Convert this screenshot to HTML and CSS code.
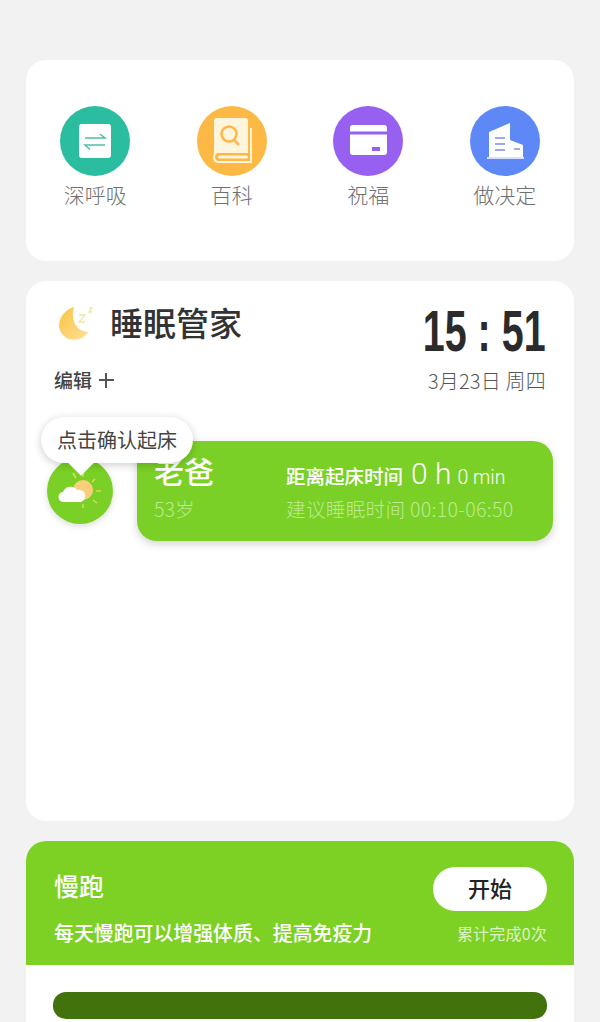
FILE: index.html
```html
<!DOCTYPE html>
<html lang="zh-CN">
<head>
    <meta charset="UTF-8">
    <title>睡眠管家</title>
    <link rel="stylesheet" href="styles.css">
</head>
<body>
    <!-- shortcuts -->
    <div class="card shortcuts">
        <div class="shortcut">
            <svg class="round-icon" viewBox="0 0 70 70">
                <circle cx="35" cy="35" r="35" fill="#2bbd9f"/>
                <rect x="19" y="18" width="32" height="34" rx="3" fill="#fff"/>
                <path d="M25 32h20l-5-4M45 39H25l5 4.500" fill="none" stroke="#4fbfa8" stroke-width="1.500"/>
            </svg>
            <span>深呼吸</span>
        </div>
        <div class="shortcut">
            <svg class="round-icon" viewBox="0 0 70 70">
                <circle cx="35" cy="35" r="35" fill="#fdb945"/>
                <path d="M17 50V15a3 3 0 0 1 3-3h28a3 3 0 0 1 3 3v31H20z" fill="#fff4dc"/>
                <path d="M54 22v34H22q-5 0-5-5q0-5 5-5h29" fill="none" stroke="#fff4dc" stroke-width="2"/>
                <rect x="21" y="49.500" width="30" height="3" rx="1.500" fill="#fff4dc"/>
                <circle cx="32" cy="28" r="7.500" fill="none" stroke="#fdb945" stroke-width="2.500"/>
                <path d="M37 34l5 5" stroke="#fdb945" stroke-width="2.500"/>
            </svg>
            <span>百科</span>
        </div>
        <div class="shortcut">
            <svg class="round-icon" viewBox="0 0 70 70">
                <circle cx="35" cy="35" r="35" fill="#9860f0"/>
                <path d="M17 25.500V22a3 3 0 0 1 3-3h31a3 3 0 0 1 3 3v3.500zM17 28.500h37V46a3 3 0 0 1-3 3H20a3 3 0 0 1-3-3z" fill="#fff"/>
                <rect x="39" y="41" width="8" height="4" fill="#9860f0"/>
            </svg>
            <span>祝福</span>
        </div>
        <div class="shortcut">
            <svg class="round-icon" viewBox="0 0 70 70">
                <circle cx="35" cy="35" r="35" fill="#5f88f7"/>
                <path d="M19 26L40 17V51H19zM40 34l13 5V51H40z" fill="#fff"/>
                <path d="M17 52h37" stroke="#fff" stroke-width="1.500"/>
                <path d="M25 32h10M25 38h10M25 44h10M44 43h6" stroke="#7f8fe0" stroke-width="1.500"/>
            </svg>
            <span>做决定</span>
        </div>
    </div>

    <!-- sleep -->
    <div class="card sleep">
        <div class="sleep-head">
            <div>
                <div class="sleep-title">
                    <svg class="moon" viewBox="0 -2 38 38">
                        <defs>
                            <linearGradient id="moonFill" x1="0" y1="0" x2="1" y2="1">
                                <stop offset="0" stop-color="#f9c440"/>
                                <stop offset="1" stop-color="#fde09a"/>
                            </linearGradient>
                        </defs>
                        <path d="M17 2C4 6-2 20 5 29C12 38 26 36 31 27C20 27 13 15 17 2z" fill="url(#moonFill)"/>
                        <path d="M22 10h6l-6 7h6M32 3h3l-3 4h3" fill="none" stroke="#eee9a0" stroke-width="1.300"/>
                    </svg>
                    <h1>睡眠管家</h1>
                </div>
                <div class="edit">编辑 <span class="plus"></span></div>
            </div>
            <div class="clock">
                <div class="time">15 : 51</div>
                <div class="date">3月23日 周四</div>
            </div>
        </div>

        <div class="member">
            <div class="tip">点击确认起床</div>
            <div class="weather">
                <svg viewBox="0 0 66 66">
                    <path d="M26 15l3 5M36 14v5M48 21l-3 3M54 33h-5M50 45l-4-3M36 50v-4" stroke="#dcdc4c" stroke-width="1.500"/>
                    <circle cx="36" cy="32" r="10" fill="#f9cf7b"/>
                    <path d="M17 44a5 5 0 0 1-1-10a8 8 0 0 1 14-2a6 6 0 0 1 4 12z" fill="#fff"/>
                </svg>
            </div>
            <div class="member-info">
                <div class="person">
                    <div class="name">老爸</div>
                    <div class="faint">53岁</div>
                </div>
                <div class="wake">
                    <div class="countdown">
                        <b>距离起床时间</b>
                        <span class="big">0 h</span>
                        <span class="min">0 min</span>
                    </div>
                    <div class="faint advice">建议睡眠时间 00:10-06:50</div>
                </div>
            </div>
        </div>
    </div>

    <!-- running -->
    <div class="card run">
        <div class="run-head">
            <div class="run-row">
                <div class="run-name">慢跑</div>
                <div class="start">开始</div>
            </div>
            <div class="run-row run-sub">
                <div class="run-desc">每天慢跑可以增强体质、提高免疫力</div>
                <div class="run-total">累计完成0次</div>
            </div>
        </div>
        <div class="run-bar"></div>
    </div>
</body>
</html>
```

FILE: styles.css
```css
html, body {
    height: 1022px;
    overflow: hidden;
}
body {
    margin: 0;
    padding: 60px 26px 0;
    box-sizing: border-box;
    background-color: #f2f2f2;
    font-family: "Noto Sans CJK SC", "Noto Sans", sans-serif;
    color: #333333;
}
.card {
    background-color: #ffffff;
    border-radius: 20px;
    margin-bottom: 20px;
}

.shortcuts {
    display: grid;
    grid-template-columns: repeat(4, 1fr);
    height: 201px;
    box-sizing: border-box;
    padding: 46px 1px 0;
}
.shortcut {
    display: flex;
    flex-direction: column;
    align-items: center;
    gap: 3px;
    font-size: 21px;
    font-weight: 300;
    line-height: 30px;
    color: #707070;
}
.round-icon {
    width: 70px;
    height: 70px;
}

.sleep {
    height: 540px;
}
.sleep-head {
    display: flex;
    justify-content: space-between;
    padding: 22px 28px 0;
}
.sleep-title {
    display: flex;
    align-items: center;
    gap: 15px;
    padding-left: 3px;
}
.moon {
    width: 38px;
    height: 38px;
}
h1 {
    margin: 0;
    font-size: 33px;
    font-weight: 500;
    line-height: 38px;
    color: #333333;
}
.edit {
    display: flex;
    align-items: center;
    gap: 7px;
    margin-top: 25px;
    font-size: 19px;
    font-weight: 500;
    line-height: 28px;
    color: #444444;
}
.plus {
    position: relative;
    width: 15px;
    height: 15px;
}
.plus::before,
.plus::after {
    content: "";
    position: absolute;
    background-color: #555555;
}
.plus::before {
    left: 0;
    right: 0;
    top: 6px;
    height: 2px;
}
.plus::after {
    top: 0;
    bottom: 0;
    left: 6px;
    width: 2px;
}
.clock {
    text-align: right;
}
.time {
    margin-top: -1px;
    font-family: "Liberation Sans", sans-serif;
    font-size: 58px;
    font-weight: 700;
    line-height: 58px;
    color: #2b2b2b;
    transform: scaleX(0.68);
    transform-origin: right center;
}
.date {
    margin-top: 7px;
    font-size: 20px;
    font-weight: 300;
    letter-spacing: 0.200px;
    line-height: 28px;
    color: #555555;
}

.member {
    position: relative;
    display: flex;
    align-items: flex-start;
    margin-top: 46px;
    padding: 0 21px;
}
.weather {
    flex: none;
    width: 66px;
    height: 66px;
    margin-top: 17px;
    border-radius: 50%;
    background-color: #7ad026;
    box-shadow: 0 2px 6px rgba(0, 0, 0, 0.15);
}
.weather svg {
    display: block;
}
.member-info {
    flex: 1;
    display: flex;
    gap: 72px;
    height: 100px;
    box-sizing: border-box;
    margin-left: 24px;
    padding: 9px 17px 0;
    border-radius: 20px;
    background-color: #7ad026;
    box-shadow: 0 3px 8px rgba(0, 0, 0, 0.18);
    color: #ffffff;
}
.name {
    font-size: 30px;
    font-weight: 500;
    line-height: 40px;
}
.faint {
    margin-top: 5px;
    font-size: 19.600px;
    font-weight: 300;
    line-height: 28px;
    color: #bdeb92;
}
.wake {
    padding-top: 4px;
}
.advice {
    margin-top: 1px;
    letter-spacing: 0.300px;
}
.countdown {
    display: flex;
    align-items: baseline;
    gap: 8px;
    height: 40px;
    line-height: 40px;
}
.countdown b {
    font-size: 19.500px;
    font-weight: 500;
}
.big {
    font-family: "Roboto", sans-serif;
    font-size: 30px;
    font-weight: 300;
}
.min {
    font-family: "Roboto", sans-serif;
    font-size: 19.500px;
    font-weight: 300;
    margin-left: -2px;
}
.tip {
    position: absolute;
    left: 15px;
    top: -24px;
    z-index: 2;
    width: 152px;
    height: 46px;
    border-radius: 23px;
    background-color: #ffffff;
    box-shadow: 0 2px 8px rgba(0, 0, 0, 0.2);
    color: #444444;
    font-size: 20px;
    line-height: 46px;
    text-align: center;
}
.tip::after {
    content: "";
    position: absolute;
    left: 31px;
    bottom: -9px;
    width: 18px;
    height: 18px;
    background-color: #ffffff;
    transform: rotate(45deg);
}

.run {
    height: 181px;
    margin-bottom: 0;
    border-radius: 20px 20px 0 0;
    overflow: hidden;
}
.run-head {
    height: 124px;
    box-sizing: border-box;
    padding: 26px 27px 0 28px;
    background-color: #7dd124;
    color: #ffffff;
}
.run-row {
    display: flex;
    justify-content: space-between;
    align-items: center;
}
.run-name {
    padding-bottom: 8px;
    font-size: 25px;
    font-weight: 500;
}
.start {
    width: 114px;
    height: 44px;
    border-radius: 22px;
    background-color: #ffffff;
    color: #222222;
    font-size: 22px;
    font-weight: 500;
    line-height: 40px;
    text-align: center;
}
.run-sub {
    margin-top: 7px;
}
.run-desc {
    font-size: 19.900px;
    font-weight: 500;
    line-height: 30px;
}
.run-total {
    font-size: 16px;
    letter-spacing: 0.200px;
    line-height: 30px;
    color: #dcf3c4;
}
.run-bar {
    height: 27px;
    margin: 27px 27px 0;
    border-radius: 13px;
    background-color: #41720b;
}
```
